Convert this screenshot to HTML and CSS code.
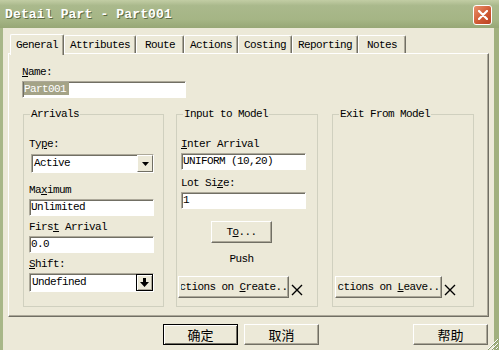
FILE: index.html
```html
<!DOCTYPE html>
<html lang="en">
<head>
  <meta charset="UTF-8" />
  <title>Detail Part - Part001</title>
  <link rel="stylesheet" href="styles.css">
</head>
<body>

  <div class="window">
    <div class="titlebar">
      <span class="title">Detail Part - Part001</span>
      <span class="close">
        <svg width="10" height="10" viewBox="0 0 10 10"><path d="M1 1L9 9M9 1L1 9" stroke="#fff" stroke-width="2.2" stroke-linecap="round"/></svg>
      </span>
    </div>

    <div class="client">
      <div class="tabs">
        <div class="tab active">General</div>
        <div class="tab">Attributes</div>
        <div class="tab">Route</div>
        <div class="tab">Actions</div>
        <div class="tab">Costing</div>
        <div class="tab">Reporting</div>
        <div class="tab">Notes</div>
      </div>

      <div class="panel">
        <div class="lbl"><u>N</u>ame:</div>
        <div class="edit name-edit"><span class="sel">Part001</span></div>

        <div class="groups">
          <fieldset class="group arrivals">
            <legend>Arrivals</legend>
            <div class="lbl">Ty<u>p</u>e:</div>
            <div class="combo type-combo">
              <span class="combo-text">Active</span>
              <span class="drop">
                <svg width="7" height="4" viewBox="0 0 7 4"><path d="M0 0H7L3.5 4Z" fill="#000"/></svg>
              </span>
            </div>
            <div class="lbl gap-l">Ma<u>x</u>imum</div>
            <div class="edit">Unlimited</div>
            <div class="lbl gap-s">Firs<u>t</u> Arrival</div>
            <div class="edit">0.0</div>
            <div class="lbl gap-s"><u>S</u>hift:</div>
            <div class="combo">
              <span class="combo-text">Undefined</span>
              <span class="drop drop-shift">
                <svg width="9" height="9" viewBox="0 0 9 9"><path d="M3 0H6V4H9L4.5 9L0 4H3Z" fill="#000"/></svg>
              </span>
            </div>
          </fieldset>

          <fieldset class="group input-model">
            <legend>Input to Model</legend>
            <div class="lbl"><u>I</u>nter Arrival</div>
            <div class="edit">UNIFORM (10,20)</div>
            <div class="lbl gap-m">Lot Si<u>z</u>e:</div>
            <div class="edit">1</div>
            <div class="center">
              <div class="btn to-btn">T<u>o</u>...</div>
              <div class="push">Push</div>
            </div>
            <div class="action-row">
              <div class="btn action-btn create-btn"><div class="clip"><span>Actions on <u>C</u>reate...</span></div></div>
              <svg class="x-mark" width="12" height="12" viewBox="0 0 12 12"><path d="M1 1L11 11M11 1L1 11" stroke="#000" stroke-width="1.4"/></svg>
            </div>
          </fieldset>

          <fieldset class="group exit-model">
            <legend>Exit From Model</legend>
            <div class="action-row">
              <div class="btn action-btn leave-btn"><div class="clip"><span>Actions on <u>L</u>eave...</span></div></div>
              <svg class="x-mark" width="12" height="12" viewBox="0 0 12 12"><path d="M1 1L11 11M11 1L1 11" stroke="#000" stroke-width="1.4"/></svg>
            </div>
          </fieldset>
        </div>
      </div>

      <div class="buttons">
        <div class="btn dlg-btn default">确定</div>
        <div class="btn dlg-btn cancel">取消</div>
        <div class="btn dlg-btn">帮助</div>
      </div>
    </div>

    <svg class="grip" width="14" height="14" viewBox="0 0 14 14">
      <path d="M13 3L3 13M13 7L7 13M13 11L11 13" stroke="#fff" stroke-width="1"/>
      <path d="M14 3L3 14M14 7L7 14M14 11L11 14" stroke="#8c9a6c" stroke-width="1"/>
    </svg>
  </div>

</body>
</html>
```

FILE: styles.css
```css
body {
  margin: 0;
  overflow: hidden;
  font: 11px/13px "Liberation Mono", monospace;
  letter-spacing: -0.6px;
  color: #000;
}
u {
  text-decoration: underline;
  text-underline-offset: 1px;
}
.window {
  position: relative;
  width: 499px;
  height: 350px;
  display: flex;
  flex-direction: column;
  background: #ece9d8;
}
.titlebar {
  height: 28px;
  box-sizing: border-box;
  display: flex;
  align-items: center;
  justify-content: space-between;
  padding: 1px 7px 0 5px;
  background: linear-gradient(#c2cda4, #aab98c 20%, #a5b585 70%, #97a776);
}
.title {
  font: bold 13px "Liberation Mono", monospace;
  letter-spacing: 0.15px;
  color: #fff;
  text-shadow: 1px 1px 0 #5d6b42;
}
.close {
  width: 19px;
  height: 20px;
  box-sizing: border-box;
  display: flex;
  align-items: center;
  justify-content: center;
  border: 1px solid #fff;
  border-radius: 3px;
  background: linear-gradient(135deg, #e9926c, #d05a34 55%, #bb4323);
}
.client {
  flex: 1;
  display: flex;
  flex-direction: column;
  padding: 5px 5px 0 5px;
  border-left: 3px solid #a8b788;
  border-right: 5px solid #a1b07e;
}
.tabs {
  display: flex;
  align-items: flex-end;
  height: 21px;
  padding-left: 2px;
}
.tab {
  height: 18px;
  box-sizing: border-box;
  min-width: 48px;
  padding: 3px 5px 0;
  text-align: center;
  border-top: 1px solid #fff;
  border-left: 1px solid #fff;
  border-right: 1px solid #716f64;
  box-shadow: inset -1px 0 0 #aca899;
  border-radius: 2px 2px 0 0;
  margin-bottom: 1px;
}
.tab.active {
  position: relative;
  z-index: 1;
  height: 21px;
  margin-bottom: -1px;
  padding: 4px 5px 0;
  background: #ece9d8;
}
.panel {
  height: 264px;
  box-sizing: border-box;
  margin-top: -1px;
  padding: 12px 13px 0;
  border-top: 1px solid #fff;
  border-left: 1px solid #fff;
  border-right: 1px solid #716f64;
  border-bottom: 1px solid #716f64;
  box-shadow: inset -1px -1px 0 #aca899;
}
.lbl {
  height: 13px;
  line-height: 13px;
  white-space: nowrap;
}
.gap-l {
  margin-top: 11px;
}
.gap-m {
  margin-top: 7px;
}
.gap-s {
  margin-top: 5px;
}
.edit {
  height: 17px;
  box-sizing: border-box;
  margin-top: 2px;
  padding-left: 1px;
  line-height: 14px;
  white-space: nowrap;
  background: #fff;
  border: 1px solid;
  border-color: #aca899 #fff #fff #aca899;
  box-shadow: inset 1px 1px 0 #716f64;
}
.name-edit {
  width: 164px;
  margin-top: 2px;
}
.sel {
  display: inline-block;
  height: 13px;
  padding-right: 3px;
  background: #a4a387;
  color: #fff;
}
.groups {
  display: flex;
  margin-top: 10px;
}
.group {
  margin: 0;
  min-width: 0;
  height: 199px;
  box-sizing: border-box;
  display: flex;
  flex-direction: column;
  padding: 17px 0 8px 5px;
  border: 1px solid #d0d0bf;
}
.group legend {
  margin-left: 1px;
  padding: 0 1px;
  line-height: 13px;
}
.arrivals {
  width: 141px;
  margin-left: 1px;
}
.input-model {
  width: 142px;
  margin-left: 12px;
  padding-left: 4px;
}
.exit-model {
  width: 142px;
  margin-left: 14px;
  padding-left: 4px;
}
.input-model legend,
.exit-model legend {
  margin-left: 2px;
}
.arrivals .edit,
.arrivals .combo {
  width: 125px;
}
.input-model .edit {
  width: 125px;
}
.combo {
  height: 19px;
  box-sizing: border-box;
  margin-top: 2px;
  display: flex;
  align-items: center;
  justify-content: space-between;
  background: #fff;
  border: 1px solid;
  border-color: #aca899 #fff #fff #aca899;
  box-shadow: inset 1px 1px 0 #716f64;
}
.arrivals .type-combo {
  margin-top: 3px;
  margin-left: 2px;
  width: 123px;
}
.combo-text {
  padding-left: 2px;
  white-space: nowrap;
}
.drop {
  width: 16px;
  height: 17px;
  box-sizing: border-box;
  display: flex;
  align-items: center;
  justify-content: center;
  background: #ece9d8;
  border: 1px solid;
  border-color: #fff #716f64 #716f64 #fff;
}
.drop-shift {
  width: 17px;
  border: 1px solid #000;
  box-shadow: inset 1px 1px 0 #fff, inset -1px -1px 0 #aca899;
}
.btn {
  box-sizing: border-box;
  display: flex;
  align-items: center;
  justify-content: center;
  background: #ece9d8;
  border: 1px solid;
  border-color: #fff #716f64 #716f64 #fff;
  box-shadow: inset -1px -1px 0 #aca899;
  white-space: nowrap;
}
.center {
  width: 121px;
  display: flex;
  flex-direction: column;
  align-items: center;
  margin-top: 12px;
}
.to-btn {
  width: 61px;
  height: 22px;
}
.push {
  margin-top: 10px;
}
.action-row {
  display: flex;
  align-items: center;
  margin-top: auto;
}
.action-btn {
  height: 22px;
}
.clip {
  width: 100%;
  margin: 0 2px;
  overflow: hidden;
  display: flex;
  justify-content: center;
}
.create-btn {
  width: 111px;
  margin-left: -3px;
}
.leave-btn {
  width: 107px;
  margin-left: -2px;
}
.x-mark {
  margin: 6px 0 0 2px;
}
.buttons {
  display: flex;
  justify-content: flex-end;
  padding: 7px 1px 0 0;
}
.dlg-btn {
  width: 75px;
  height: 21px;
  font: 13px "Noto Sans CJK SC", sans-serif;
  letter-spacing: 0;
  margin-left: 6px;
}
.dlg-btn.default {
  border: 1px solid #000;
  box-shadow: inset 1px 1px 0 #fff, inset -1px -1px 0 #716f64;
}
.dlg-btn.cancel {
  margin-right: 88px;
}
.grip {
  position: absolute;
  right: 0;
  bottom: 0;
}
```
